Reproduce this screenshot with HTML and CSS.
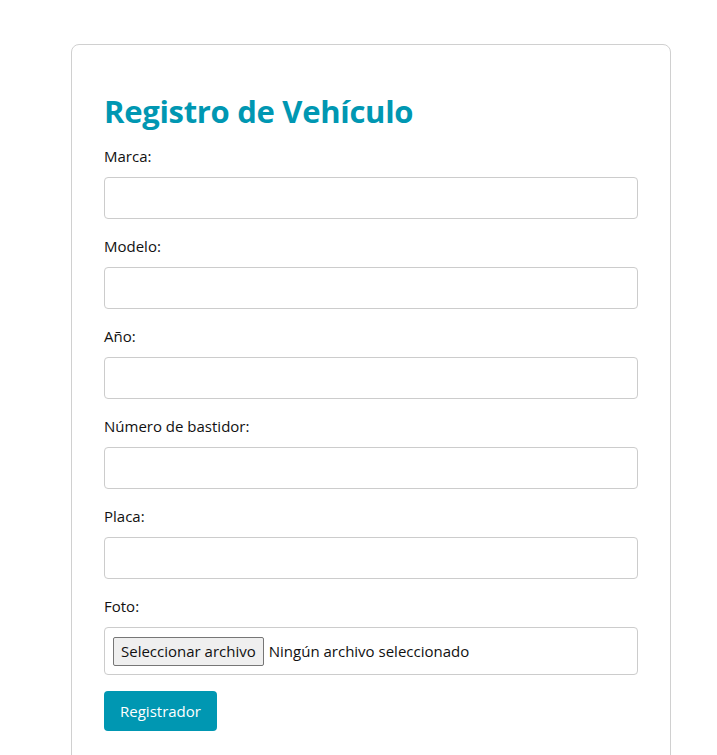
FILE: index.html
```html
<!DOCTYPE html>
<html lang="es">
<head>
<meta charset="utf-8">
<title>Registro de Vehículo</title>
<link rel="stylesheet" href="styles.css">
</head>
<body>
<div class="page">
  <form class="card">
    <h1 class="title">Registro de Vehículo</h1>
    <div class="field">
      <label class="label" for="marca">Marca:</label>
      <input class="input" id="marca" type="text">
    </div>
    <div class="field">
      <label class="label" for="modelo">Modelo:</label>
      <input class="input" id="modelo" type="text">
    </div>
    <div class="field">
      <label class="label" for="anio">Año:</label>
      <input class="input" id="anio" type="text">
    </div>
    <div class="field">
      <label class="label" for="bastidor">Número de bastidor:</label>
      <input class="input" id="bastidor" type="text">
    </div>
    <div class="field">
      <label class="label" for="placa">Placa:</label>
      <input class="input" id="placa" type="text">
    </div>
    <div class="field field-last">
      <label class="label" for="foto">Foto:</label>
      <div class="file-box">
        <span class="file-btn">Seleccionar archivo</span>
        <span class="file-text">Ningún archivo seleccionado</span>
      </div>
    </div>
    <button class="submit" type="button">Registrador</button>
  </form>
</div>
</body>
</html>
```

FILE: styles.css
```css
* { box-sizing: border-box; }
html, body { margin: 0; padding: 0; background: #fff; }
body {
  font-family: "Open Sans", "Noto Sans", "DejaVu Sans", sans-serif;
  color: #111;
}
.page {
  padding: 44px 0 0 71px;
}
.card {
  width: 600px;
  border: 1px solid #d0d0d0;
  border-radius: 8px;
  padding: 32px 32px 40px;
  display: flex;
  flex-direction: column;
}
.title {
  margin: 14px 0 15px;
  font-size: 31px;
  font-weight: 700;
  color: #0097b2;
  line-height: 40px;
  letter-spacing: -0.3px;
}
.field {
  display: flex;
  flex-direction: column;
  margin-bottom: 17px;
}
.field-last {
  margin-bottom: 16px;
}
.label {
  font-size: 15px;
  line-height: 21px;
  margin-bottom: 10px;
}
.input {
  height: 42px;
  border: 1px solid #cccccc;
  border-radius: 4px;
  font: inherit;
  padding: 0 10px;
}
.file-box {
  height: 48px;
  border: 1px solid #cccccc;
  border-radius: 4px;
  display: flex;
  align-items: center;
  padding: 0 8px;
  font-size: 15px;
}
.file-btn {
  background: #efefef;
  border: 1px solid #767676;
  border-radius: 2px;
  height: 29px;
  padding: 0 7px;
  display: flex;
  align-items: center;
  font-size: 15px;
  color: #111;
}
.file-text {
  margin-left: 5px;
  font-size: 15px;
  color: #111;
}
.submit {
  align-self: flex-start;
  background: #0097b2;
  color: #fff;
  border: none;
  border-radius: 4px;
  height: 40px;
  width: 113px;
  font: inherit;
  font-size: 15px;
  padding: 0;
}
```
